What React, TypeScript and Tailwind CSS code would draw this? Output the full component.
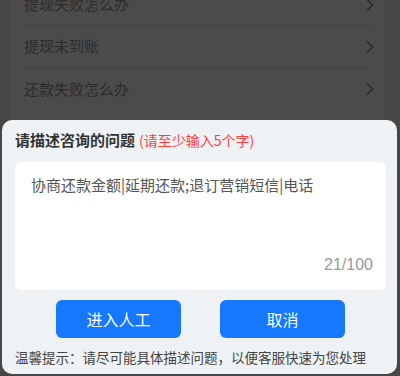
export default function App() {
  const rows = ["提现失败怎么办", "提现未到账", "还款失败怎么办"];
  return (
    <div
      className="relative w-[400px] h-[376px] overflow-hidden bg-[#474747]"
      style={{ fontFamily: '"Noto Sans CJK SC", "Noto Sans", sans-serif' }}
    >
      {/* page behind the dialog */}
      <div className="ml-[10px] mr-[15px] h-full bg-[#4b4b4b] -mt-[16px]">
        {rows.map((r, i) => (
          <div
            key={r}
            className={`ml-[14px] mr-[10px] h-[42px] flex items-center justify-between ${i < rows.length - 1 ? "border-b border-[#444]" : ""}`}
          >
            <span className="text-[15px] text-[#2c2c2c]">{r}</span>
            <svg width="10" height="14" viewBox="0 0 10 14">
              <path d="M2 1.5 L7.5 7 L2 12.5" fill="none" stroke="#2a2a2a" strokeWidth="1.6" />
            </svg>
          </div>
        ))}
      </div>

      {/* dialog */}
      <div className="absolute left-[2px] right-[3px] top-[120px] bottom-[2px] rounded-[10px] bg-[#eef2f5] pl-[13px] pr-[11px] pt-[9px]">
        <div className="flex items-baseline h-[26px]">
          <span className="text-[15px] font-bold text-[#333]">请描述咨询的问题</span>
          <span className="ml-[4px] text-[14px] text-[#ff3d3d]">(请至少输入5个字)</span>
        </div>
        <div className="mt-[7px] h-[128px] rounded-[6px] bg-white pl-[16px] pr-[13px] pt-[10px] flex flex-col">
          <div className="text-[15px] text-[#555] leading-[26px]">协商还款金额|延期还款;退订营销短信|电话</div>
          <div className="mt-auto mb-[13px] text-right text-[16px] text-[#999]" style={{ fontFamily: '"Liberation Sans", "Noto Sans CJK SC", sans-serif' }}>
            21/100
          </div>
        </div>
        <div className="mt-[10px] flex gap-[39px] pl-[41px]">
          <button className="w-[125px] h-[38px] rounded-[6px] bg-[#1677ff] text-white text-[16px]">进入人工</button>
          <button className="w-[125px] h-[38px] rounded-[6px] bg-[#1677ff] text-white text-[16px]">取消</button>
        </div>
        <div className="mt-[9px] text-[13.5px] text-[#444] whitespace-nowrap">温馨提示：请尽可能具体描述问题，以便客服快速为您处理</div>
      </div>
    </div>
  );
}
